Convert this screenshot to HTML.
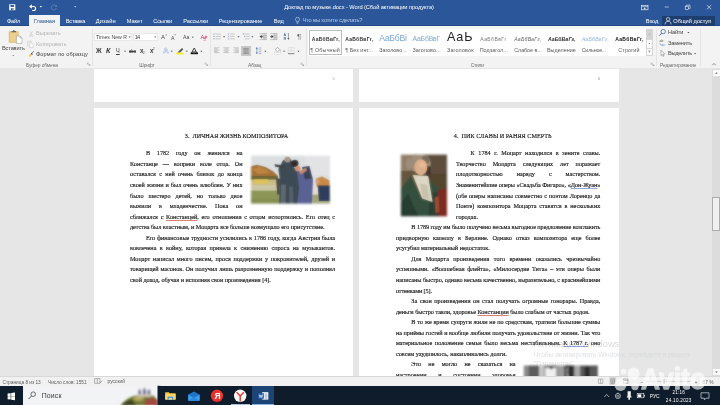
<!DOCTYPE html>
<html lang="ru"><head><meta charset="utf-8"><title>Доклад по музыке.docx - Word</title>
<style>
html,body{margin:0;padding:0;background:#e6e6e6;}
body{width:720px;height:405px;overflow:hidden;font-family:"Liberation Sans",sans-serif;}
#root{will-change:transform;position:relative;width:720px;height:405px;overflow:hidden;background:#e6e6e6;}
#root div, #root svg{position:absolute;}
.t{white-space:nowrap;line-height:normal;}
.b{box-sizing:border-box;}
.dl{font-family:"Liberation Serif",serif;font-size:6.2px;color:#161616;white-space:nowrap;line-height:7px;height:7px;-webkit-text-stroke:0.14px #161616;}
.dl.j{text-align:justify;text-align-last:justify;}
.sq{text-decoration:underline;text-decoration-color:#dc8076;text-decoration-thickness:0.45px;text-underline-offset:0.9px;}
.du{text-decoration:underline;text-decoration-color:#8fa4d8;text-decoration-thickness:0.55px;text-underline-offset:0.9px;}

</style></head>
<body>
<div id="root">
<!-- title bar + tabs -->
<div style="left:0;top:0;width:720px;height:26.2px;background:#2b579a"></div>
<div style="left:0;top:25.4px;width:720px;height:1px;background:#234a85"></div>
<!-- ribbon -->
<div style="left:0;top:26.3px;width:720px;height:42.2px;background:#f3f3f3"></div>
<div style="left:0;top:68px;width:720px;height:0.7px;background:#e5e5e5"></div>
<!-- active tab -->
<div style="left:28.9px;top:15.4px;width:31.1px;height:11.4px;background:#f3f3f3"></div>
<!-- share button -->
<div style="left:662px;top:15.8px;width:53px;height:9.8px;background:#1e3e70"></div>
<!-- group separators -->
<div style="left:92px;top:29px;width:0.6px;height:37px;background:#e4e4e4"></div>
<div style="left:210.4px;top:29px;width:0.6px;height:37px;background:#e4e4e4"></div>
<div style="left:305.6px;top:29px;width:0.6px;height:37px;background:#e4e4e4"></div>
<div style="left:655.8px;top:29px;width:0.6px;height:37px;background:#e4e4e4"></div>
<div style="left:700px;top:29px;width:0.6px;height:37px;background:#e4e4e4"></div>
<!-- font combo boxes -->
<div class="b" style="left:94px;top:32.6px;width:38.2px;height:8.8px;background:#fff;border:0.5px solid #e8e8e8"></div>
<div class="b" style="left:133.2px;top:32.6px;width:24.6px;height:8.8px;background:#fff;border:0.5px solid #e8e8e8"></div>
<!-- justify selected -->
<div style="left:241px;top:46px;width:10px;height:9.8px;background:#c8c8c8"></div>
<!-- styles gallery -->
<div style="left:308.3px;top:29.4px;width:338px;height:26.6px;background:#fff"></div>
<div class="b" style="left:308.7px;top:29.8px;width:33px;height:25.6px;background:#fff;border:0.9px solid #bdbdbd"></div>
<div class="b" style="left:646.3px;top:29.2px;width:6.3px;height:27px;background:#fff;border:0.4px solid #d6d6d6"></div>
<div style="left:646.5px;top:29.4px;width:5.9px;height:9.4px;background:#d4d4d4"></div>
<div style="left:646.5px;top:38.8px;width:5.9px;height:0.4px;background:#d6d6d6"></div>
<div style="left:646.5px;top:47.6px;width:5.9px;height:0.4px;background:#d6d6d6"></div>
<!-- document area -->
<div style="left:0;top:68.6px;width:720px;height:307.4px;background:#e6e6e6"></div>
<!-- pages -->
<div style="left:93.6px;top:68.6px;width:259.3px;height:33.4px;background:#fff"></div>
<div style="left:359.1px;top:68.6px;width:259.9px;height:33.4px;background:#fff"></div>
<div style="left:93.6px;top:107.6px;width:259.3px;height:268.6px;background:#fff"></div>
<div style="left:359.1px;top:107.6px;width:259.9px;height:268.6px;background:#fff"></div>
<!-- scrollbar -->
<div style="left:712.3px;top:68.6px;width:7.7px;height:307.4px;background:#dcdcdc"></div>
<div style="left:712.8px;top:69.5px;width:7.2px;height:6.9px;background:#fdfdfd"></div>
<div style="left:712.8px;top:368.9px;width:7.2px;height:6.4px;background:#fdfdfd"></div>
<div class="b" style="left:712.3px;top:197.1px;width:7.7px;height:34.3px;background:#f0f0f0;border:0.5px solid #ababab"></div>

<div class="dl j" style="left:145.9px;top:149.00px;width:96.6px">В 1782 году он женился на</div>
<div class="dl j" style="left:130.0px;top:160.00px;width:112.5px">Констанце — вопреки воле отца. Он</div>
<div class="dl j" style="left:130.0px;top:170.00px;width:112.5px">оставался с ней очень близок до конца</div>
<div class="dl j" style="left:130.0px;top:181.00px;width:112.5px">своей жизни и был очень влюблен. У них</div>
<div class="dl j" style="left:130.0px;top:192.00px;width:112.5px">было шестеро детей, но только двое</div>
<div class="dl j" style="left:130.0px;top:202.00px;width:112.5px">выжили в младенчестве. Пока он</div>
<div class="dl j" style="left:130.0px;top:213.00px;width:205.0px">сближался с <span class="sq">Констанцей</span>, его отношения с отцом испортились. Его отец с</div>
<div class="dl j" style="left:130.0px;top:223.00px;width:194.5px;letter-spacing:-0.0440px">детства был властным, и Моцарта все больше возмущало его присутствие.</div>
<div class="dl j" style="left:145.9px;top:234.00px;width:189.1px">Его финансовые трудности усилились в 1786 году, когда Австрия была</div>
<div class="dl j" style="left:130.0px;top:244.00px;width:205.0px">вовлечена в войну, которая привела к снижению спроса на музыкантов.</div>
<div class="dl j" style="left:130.0px;top:255.00px;width:205.0px">Моцарт написал много писем, прося поддержки у покровителей, друзей и</div>
<div class="dl j" style="left:130.0px;top:265.00px;width:205.0px">товарищей масонов. Он получил лишь разрозненную поддержку и пополнял</div>
<div class="dl j" style="left:130.0px;top:276.00px;width:140.8px;letter-spacing:-0.0299px">свой доход, обучая и исполняя свои произведения [4].</div>
<div class="dl j" style="left:470.6px;top:149.00px;width:129.7px">К 1784 г. Моцарт находился в зените славы.</div>
<div class="dl j" style="left:456.0px;top:160.00px;width:144.3px">Творчество Моцарта следующих лет поражает</div>
<div class="dl j" style="left:456.0px;top:170.00px;width:144.3px">плодотворностью наряду с мастерством.</div>
<div class="dl j" style="left:456.0px;top:181.00px;width:144.3px;letter-spacing:-0.0599px">Знаменитейшие оперы «Свадьба Фигаро», «<span class="du">Дон-Жуан</span>»</div>
<div class="dl j" style="left:456.0px;top:192.00px;width:144.3px">(обе оперы написаны совместно с поэтом Лоренцо да</div>
<div class="dl j" style="left:456.0px;top:202.00px;width:144.3px">Понте) композитора Моцарта ставятся в нескольких</div>
<div class="dl" style="left:456.0px;top:213.00px">городах.</div>
<div class="dl j" style="left:411.3px;top:223.00px;width:189.0px;letter-spacing:-0.0669px">В 1789 году им было получено весьма выгодное предложение возглавить</div>
<div class="dl j" style="left:396.0px;top:234.00px;width:204.3px">придворную капеллу в Берлине. Однако отказ композитора еще более</div>
<div class="dl j" style="left:396.0px;top:244.00px;width:93.8px;letter-spacing:-0.0624px">усугубил материальный недостаток.</div>
<div class="dl j" style="left:411.3px;top:255.00px;width:189.0px">Для Моцарта произведения того времени оказались чрезвычайно</div>
<div class="dl j" style="left:396.0px;top:265.00px;width:204.3px">успешными. «Волшебная флейта», «Милосердие Тита» – эти оперы были</div>
<div class="dl j" style="left:396.0px;top:276.00px;width:204.3px;letter-spacing:-0.0392px">написаны быстро, однако весьма качественно, выразительно, с красивейшими</div>
<div class="dl j" style="left:396.0px;top:287.00px;width:35.8px;letter-spacing:-0.1412px">оттенками [5].</div>
<div class="dl j" style="left:411.3px;top:297.00px;width:189.0px">За свои произведения он стал получать огромные гонорары. Правда,</div>
<div class="dl j" style="left:396.0px;top:308.00px;width:193.6px;letter-spacing:-0.0485px">деньги быстро таяли, здоровье <span class="sq">Констанции</span> было слабым от частых родов.</div>
<div class="dl j" style="left:411.3px;top:318.00px;width:189.0px">В то же время супруги жили не по средствам, тратили большие суммы</div>
<div class="dl j" style="left:396.0px;top:329.00px;width:204.3px;letter-spacing:-0.0228px">на приёмы гостей и вообще любили получать удовольствие от жизни. Так что</div>
<div class="dl j" style="left:396.0px;top:339.00px;width:204.3px">материальное положение семьи было весьма нестабильным. <span class="du">К 1787 г.</span> оно</div>
<div class="dl j" style="left:396.0px;top:350.00px;width:110.8px;letter-spacing:-0.0328px">совсем ухудшилось, накапливались долги.</div>
<div class="dl j" style="left:411.3px;top:360.00px;width:104.3px">Это не могло не сказаться на</div>
<div class="dl j" style="left:396.0px;top:371.00px;width:119.6px">настроении и состоянии здоровья</div>
<div class="dl j" style="left:184.8px;top:132.00px;width:103.1px;">3.&nbsp; ЛИЧНАЯ ЖИЗНЬ КОМПОЗИТОРА</div>
<div class="dl j" style="left:453.8px;top:132.00px;width:97.2px;">4.&nbsp; ПИК СЛАВЫ И РАНЯЯ СМЕРТЬ</div>
<div class="dl" style="left:332.5px;top:74.6px;font-size:4.4px;color:#8c8c8c;-webkit-text-stroke:0">5</div>
<div class="dl" style="left:598px;top:75px;font-size:4.4px;color:#8c8c8c;-webkit-text-stroke:0">6</div>
<!-- status bar -->
<div style="left:0;top:376px;width:720px;height:9.6px;background:#f1f1f1"></div>
<div style="left:0;top:376px;width:720px;height:0.6px;background:#d8d8d8"></div>
<!-- taskbar -->
<div style="left:0;top:385.5px;width:720px;height:19.5px;background:#0e1c2c"></div>
<div style="left:22.5px;top:385.8px;width:135px;height:19.2px;background:#f2f3f5"></div>
<div style="left:252px;top:385.5px;width:22.2px;height:19.5px;background:#1d4474"></div>
<div style="left:252px;top:403.8px;width:22.2px;height:1.2px;background:#86b3e6"></div>
<div style="left:230.8px;top:403.8px;width:19px;height:1.2px;background:#a9c1de"></div>

<svg width="720" height="405" viewBox="0 0 720 405" style="left:0;top:0">
<defs>
<filter id="b1" x="-20%" y="-20%" width="140%" height="140%"><feGaussianBlur stdDeviation="0.85"/></filter>
<filter id="b2" x="-20%" y="-20%" width="140%" height="140%"><feGaussianBlur stdDeviation="0.85"/></filter>
<filter id="b3" x="-20%" y="-20%" width="140%" height="140%"><feGaussianBlur stdDeviation="1.8"/></filter>
<filter id="b4" x="-20%" y="-20%" width="140%" height="140%"><feGaussianBlur stdDeviation="0.85"/></filter>
<filter id="soft" x="-10%" y="-10%" width="120%" height="120%"><feGaussianBlur stdDeviation="0.9"/></filter>
</defs>
<rect x="9.2" y="4.3" width="6.1" height="6" rx="0.4" fill="#fff"/>
<rect x="10.4" y="5" width="3.7" height="1.9" fill="#2b579a"/>
<rect x="10.9" y="8.2" width="2.8" height="2.1" fill="#2b579a"/>
<rect x="12.5" y="8.6" width="0.8" height="1.3" fill="#fff"/>
<path d="M30.6 7.1 H33.6 A2 2 0 0 1 33.6 11.1 H32.6" transform="translate(0,-0.6)" stroke="#fff" stroke-width="1.15" fill="none" stroke-linecap="round"/>
<path d="M29.1 6.5 L31.9 4.3 L31.9 8.7 Z" fill="#fff"/>
<path d="M39.75 6.05L42.05 6.05L40.90 7.40Z" fill="#fff"/>
<path d="M55.9 6 A2.5 2.5 0 1 0 56.3 8" stroke="#5d7eb7" stroke-width="0.9" fill="none"/>
<path d="M57 4.6 L57 7 L54.8 6.6 Z" fill="#5d7eb7"/>
<path d="M74.30 6.35L76.10 6.35L75.20 7.40Z" fill="#fff"/>
<rect x="641.6" y="5.5" width="6.4" height="4.3" fill="none" stroke="#fff" stroke-width="0.6"/>
<path d="M641.6 6.6h6.4" stroke="#fff" stroke-width="0.5"/>
<path d="M644.8 7.3 l1.2 1.2 h-0.8 v0.9 h-0.8 v-0.9 h-0.8 z" fill="#fff"/>
<path d="M664.7 7h4.1" stroke="#fff" stroke-width="0.55"/>
<rect x="685.2" y="6.2" width="3.5" height="3.4" fill="none" stroke="#fff" stroke-width="0.55"/>
<path d="M686.4 6.2V5.1H690V8.5H688.7" fill="none" stroke="#fff" stroke-width="0.55"/>
<path d="M706.9 5.1L711.2 9.3M711.2 5.1L706.9 9.3" stroke="#fff" stroke-width="0.6"/>
<path d="M296.5 21.8 C296.5 20.8 295.5 20.5 295.5 19.3 A2 2 0 0 1 299.5 19.3 C299.5 20.5 298.5 20.8 298.5 21.8 Z" fill="none" stroke="#dfe7f5" stroke-width="0.55"/>
<path d="M296.6 22.7h1.8M296.9 23.6h1.2" stroke="#dfe7f5" stroke-width="0.5"/>
<circle cx="668.1" cy="19.2" r="1.7" fill="none" stroke="#fff" stroke-width="0.65"/>
<path d="M665.1 24.4 C665.1 22 666.6 21.3 668.1 21.3 S671.1 22 671.1 24.4" fill="none" stroke="#fff" stroke-width="0.65"/>
<rect x="8.8" y="31.2" width="9.8" height="11.6" rx="0.6" fill="#e2be73"/>
<rect x="9.9" y="32.6" width="7.6" height="9.2" fill="#ecd090"/>
<path d="M11.6 32.3 v-1.3 h1.3 a0.9 0.9 0 0 1 1.8 0 h1.3 v1.3 z" fill="#6b6b6b"/>
<path d="M16.4 36 h3.6 l2 2 v5.4 h-5.6 z" fill="#fff" stroke="#8a8a8a" stroke-width="0.5"/>
<path d="M20 36 v2 h2" fill="none" stroke="#8a8a8a" stroke-width="0.4"/>
<path d="M12.40 55.30L14.20 55.30L13.30 56.20Z" fill="#555"/>
<path d="M29.8 31.2 L32 35 M32.6 31.2 L30.4 35" stroke="#c4c4c4" stroke-width="0.55"/>
<circle cx="30" cy="35.7" r="0.8" fill="none" stroke="#c4c4c4" stroke-width="0.5"/><circle cx="32.4" cy="35.7" r="0.8" fill="none" stroke="#c4c4c4" stroke-width="0.5"/>
<path d="M27.6 41.2h3.4v4.6h-3.4z" fill="#f3f3f3" stroke="#c2c2c2" stroke-width="0.5"/>
<path d="M29.6 42.8h2.4l1.2 1.2v3.6h-3.6z" fill="#fbfbfb" stroke="#c2c2c2" stroke-width="0.5"/>
<path d="M28.9 55.4 l1.5 -1.5 l1.3 1.3 l-1.5 1.5 z" fill="#efc040"/>
<path d="M29.4 57.2 l-0.6 -1 l1 0.6 z" fill="#efc040"/>
<path d="M30.7 53.6 l1.3 1.3 l0.8 -0.8 l-1.3 -1.3z" fill="#4a4a4a"/>
<path d="M32.2 52.8 l1.5 -1.5" stroke="#4a4a4a" stroke-width="0.8"/>
<path d="M87.5 63.0h-0.01M87.4 62.900000000000006v1.6M87.4 62.900000000000006h1.6" stroke="#777" stroke-width="0.4" fill="none"/>
<path d="M88.3 63.800000000000004L89.8 65.3M89.9 64.10000000000001V65.4H88.60000000000001" stroke="#777" stroke-width="0.45" fill="none"/>
<path d="M128.60 36.60L130.80 36.60L129.70 37.80Z" fill="#505050"/>
<path d="M154.10 36.60L156.30 36.60L155.20 37.80Z" fill="#505050"/>
<path d="M165.2 35.3 l0.9 -1.1 l0.9 1.1z" fill="#555"/>
<path d="M174.3 34.5 l0.8 1 l0.8 -1z" fill="#555"/>
<path d="M123.90 50.80L126.10 50.80L125.00 52.00Z" fill="#505050"/>
<path d="M191.70 36.80L193.90 36.80L192.80 38.00Z" fill="#505050"/>
<text x="200.6" y="38.6" font-family="Liberation Sans" font-size="5.6" fill="#a0506a">A</text>
<path d="M203.6 38.2 l2.2 -2.6 l1.6 1.2 l-2.2 2.6 z" fill="#e8688d"/>
<path d="M203.0 40.3 h3.2" stroke="#e8688d" stroke-width="0.5"/>
<path d="M170.70 50.80L172.90 50.80L171.80 52.00Z" fill="#505050"/>
<path d="M178.4 51.6 l3.6 -3.6 l1.3 1.3 l-3.6 3.6 z" fill="#555"/>
<path d="M177.3 52.4 l1.1 -0.9 l0.9 0.9 l-1.1 0.5z" fill="#777"/>
<rect x="176.2" y="52.6" width="7.4" height="1.9" fill="#f4ee2a"/>
<path d="M185.70 50.80L187.90 50.80L186.80 52.00Z" fill="#505050"/>
<rect x="190.7" y="52.4" width="7.3" height="1.8" fill="#1a1a1a"/>
<path d="M200.30 50.80L202.50 50.80L201.40 52.00Z" fill="#505050"/>
<path d="M205.20000000000002 63.099999999999994h-0.01M205.1 63.0v1.6M205.1 63.0h1.6" stroke="#777" stroke-width="0.4" fill="none"/>
<path d="M206.0 63.9L207.5 65.39999999999999M207.6 64.2V65.5H206.3" stroke="#777" stroke-width="0.45" fill="none"/>
<rect x="213.4" y="33.45" width="1.1" height="1.1" fill="#8095b5"/>
<rect x="213.4" y="35.85" width="1.1" height="1.1" fill="#8095b5"/>
<rect x="213.4" y="38.25" width="1.1" height="1.1" fill="#8095b5"/>
<path d="M215.6 34H220.8" stroke="#9c9c9c" stroke-width="0.5"/>
<path d="M215.6 36.4H220.8" stroke="#9c9c9c" stroke-width="0.5"/>
<path d="M215.6 38.8H220.8" stroke="#9c9c9c" stroke-width="0.5"/>
<path d="M223.00 36.20L225.20 36.20L224.10 37.40Z" fill="#505050"/>
<rect x="227.9" y="33.3" width="0.7" height="1.4" fill="#8095b5"/>
<rect x="227.9" y="35.699999999999996" width="0.7" height="1.4" fill="#8095b5"/>
<rect x="227.9" y="38.099999999999994" width="0.7" height="1.4" fill="#8095b5"/>
<path d="M229.8 34H234.8" stroke="#9c9c9c" stroke-width="0.5"/>
<path d="M229.8 36.4H234.8" stroke="#9c9c9c" stroke-width="0.5"/>
<path d="M229.8 38.8H234.8" stroke="#9c9c9c" stroke-width="0.5"/>
<path d="M237.40 36.20L239.60 36.20L238.50 37.40Z" fill="#505050"/>
<rect x="242.8" y="33.4" width="0.8" height="1.2" fill="#8095b5"/><rect x="244.2" y="35.8" width="0.8" height="1.2" fill="#8095b5"/><rect x="245.6" y="38.2" width="0.8" height="1.2" fill="#8095b5"/>
<path d="M244.4 34H249.6" stroke="#9c9c9c" stroke-width="0.5"/>
<path d="M245.8 36.4H249.6" stroke="#9c9c9c" stroke-width="0.5"/>
<path d="M247.2 38.8H249.6" stroke="#9c9c9c" stroke-width="0.5"/>
<path d="M251.30 36.20L253.50 36.20L252.40 37.40Z" fill="#505050"/>
<rect x="262.4" y="33.4" width="4.4" height="6.4" fill="#d4d4d4"/>
<path d="M259.4 33.6H266.8" stroke="#9a9a9a" stroke-width="0.5"/>
<path d="M259.4 39.6H266.8" stroke="#9a9a9a" stroke-width="0.5"/>
<path d="M262.8 35.6H266.8" stroke="#9a9a9a" stroke-width="0.5"/>
<path d="M262.8 37.6H266.8" stroke="#9a9a9a" stroke-width="0.5"/>
<path d="M259.6 36.6 l2.2 -1.6 v3.2z" fill="#333"/><path d="M261.6 36.6h1.6" stroke="#333" stroke-width="0.6"/>
<rect x="273.2" y="33.4" width="4.2" height="6.4" fill="#d4d4d4"/>
<path d="M270.1 33.6H277.4" stroke="#9a9a9a" stroke-width="0.5"/>
<path d="M270.1 39.6H277.4" stroke="#9a9a9a" stroke-width="0.5"/>
<path d="M273.6 35.6H277.4" stroke="#9a9a9a" stroke-width="0.5"/>
<path d="M273.6 37.6H277.4" stroke="#9a9a9a" stroke-width="0.5"/>
<path d="M273.6 36.6 l-2.2 -1.6 v3.2z" fill="#333"/><path d="M270 36.6h1.6" stroke="#333" stroke-width="0.6"/>
<text x="283.5" y="36" font-family="Liberation Sans" font-size="3.6" font-weight="700" fill="#3b6fb6">А</text>
<text x="283.6" y="39.9" font-family="Liberation Sans" font-size="3.6" font-weight="700" fill="#3b6fb6">Я</text>
<path d="M288.4 33v6" stroke="#555" stroke-width="0.55"/><path d="M287.2 38.2 l1.2 1.6 l1.2 -1.6z" fill="#555"/>
<path d="M214 47.8H219.4" stroke="#999" stroke-width="0.5"/>
<path d="M214 50.2H219.4" stroke="#999" stroke-width="0.5"/>
<path d="M214 52.6H219.4" stroke="#999" stroke-width="0.5"/>
<path d="M214 49H217.6" stroke="#999" stroke-width="0.5"/>
<path d="M214 51.4H217.6" stroke="#999" stroke-width="0.5"/>
<path d="M223.3 47.8H229.3" stroke="#999" stroke-width="0.5"/>
<path d="M223.3 50.2H229.3" stroke="#999" stroke-width="0.5"/>
<path d="M223.3 52.6H229.3" stroke="#999" stroke-width="0.5"/>
<path d="M224.6 49H228" stroke="#999" stroke-width="0.5"/>
<path d="M224.6 51.4H228" stroke="#999" stroke-width="0.5"/>
<path d="M233.4 47.8H238.8" stroke="#999" stroke-width="0.5"/>
<path d="M233.4 50.2H238.8" stroke="#999" stroke-width="0.5"/>
<path d="M233.4 52.6H238.8" stroke="#999" stroke-width="0.5"/>
<path d="M235.2 49H238.8" stroke="#999" stroke-width="0.5"/>
<path d="M235.2 51.4H238.8" stroke="#999" stroke-width="0.5"/>
<path d="M243.2 48.4H248.8" stroke="#666" stroke-width="0.5"/>
<path d="M243.2 49.7H248.8" stroke="#666" stroke-width="0.5"/>
<path d="M243.2 51H248.8" stroke="#666" stroke-width="0.5"/>
<path d="M243.2 52.3H248.8" stroke="#666" stroke-width="0.5"/>
<path d="M243.2 53.6H248.8" stroke="#666" stroke-width="0.5"/>
<path d="M256.8 47.6v6" stroke="#3b6fb6" stroke-width="0.5"/><path d="M255.7 48.8l1.1-1.5l1.1 1.5zM255.7 52.4l1.1 1.5l1.1-1.5z" fill="#3b6fb6"/>
<path d="M258.6 48H261.4" stroke="#777" stroke-width="0.5"/>
<path d="M258.6 49.9H261.4" stroke="#777" stroke-width="0.5"/>
<path d="M258.6 51.8H261.4" stroke="#777" stroke-width="0.5"/>
<path d="M258.6 53.6H261.4" stroke="#777" stroke-width="0.5"/>
<path d="M264.30 50.80L266.50 50.80L265.40 52.00Z" fill="#505050"/>
<path d="M275.2 49.6 l2.3 -2.3 l2.3 2.3 l-2.3 2.3 z" fill="#fff" stroke="#666" stroke-width="0.5"/>
<path d="M280.2 50 q0.7 1 0 1.6 q-0.7 -0.6 0 -1.6z" fill="#666"/>
<rect x="274.2" y="52.7" width="6.4" height="1.6" fill="#fdfdfd" stroke="#bbb" stroke-width="0.3"/>
<path d="M283.00 50.80L285.20 50.80L284.10 52.00Z" fill="#505050"/>
<rect x="288.2" y="47.6" width="6" height="6" fill="none" stroke="#aaa" stroke-width="0.4" stroke-dasharray="0.5 0.5"/>
<path d="M291.2 47.6v6M288.2 50.6h6" stroke="#aaa" stroke-width="0.4" stroke-dasharray="0.5 0.5"/>
<path d="M288 53.7h6.4" stroke="#444" stroke-width="0.6"/>
<path d="M297.40 50.80L299.60 50.80L298.50 52.00Z" fill="#505050"/>
<path d="M301.2 63.2h-0.01M301.09999999999997 63.10000000000001v1.6M301.09999999999997 63.10000000000001h1.6" stroke="#777" stroke-width="0.4" fill="none"/>
<path d="M302.0 64.0L303.5 65.5M303.59999999999997 64.30000000000001V65.60000000000001H302.29999999999995" stroke="#777" stroke-width="0.45" fill="none"/>
<path d="M648.5 34.7l0.95-1.1l0.95 1.1z" fill="#aaa"/>
<path d="M648.5 43l0.95 1.1l0.95-1.1z" fill="#555"/>
<path d="M648.4 50.7h2" stroke="#555" stroke-width="0.4"/><path d="M648.5 51.6l0.95 1.1l0.95-1.1z" fill="#555"/>
<path d="M651.4 63.2h-0.01M651.3000000000001 63.10000000000001v1.6M651.3000000000001 63.10000000000001h1.6" stroke="#777" stroke-width="0.4" fill="none"/>
<path d="M652.2 64.0L653.7 65.5M653.8000000000001 64.30000000000001V65.60000000000001H652.5" stroke="#777" stroke-width="0.45" fill="none"/>
<circle cx="663.2" cy="31.6" r="2.2" fill="none" stroke="#3f5f9e" stroke-width="0.75"/><path d="M661.6 33.3l-2.2 2.3" stroke="#3f5f9e" stroke-width="1"/>
<path d="M687.30 32.10L689.50 32.10L688.40 33.30Z" fill="#505050"/>
<text x="659.6" y="42.3" font-family="Liberation Sans" font-size="3.3" fill="#555">ab</text>
<text x="661.6" y="45.6" font-family="Liberation Sans" font-size="3.3" fill="#3b6fb6">ac</text>
<path d="M660 43.2v1.4h1.2" stroke="#3b6fb6" stroke-width="0.4" fill="none"/>
<path d="M661 50.2 v5.4 l1.3 -1.2 l0.9 2 l0.8 -0.4 l-0.9 -1.9 h1.7 z" fill="#fff" stroke="#666" stroke-width="0.45"/>
<path d="M694.00 53.00L696.20 53.00L695.10 54.20Z" fill="#505050"/>
<path d="M712.2 65.3l1.8-1.9l1.8 1.9" stroke="#555" stroke-width="0.6" fill="none"/>
<path d="M715.1 73.7l1.3-1.5l1.3 1.5z" fill="#606060"/>
<path d="M715.1 371.4l1.3 1.5l1.3-1.5z" fill="#606060"/><path d="M94.6 378.6h5.4v4.8h-5.4zM97.3 378.6v4.8" fill="none" stroke="#666" stroke-width="0.45"/>
<path d="M99.6 381.6l0.9 0.9l1.6-2" stroke="#666" stroke-width="0.5" fill="none"/>
<path d="M598.4 379h4.4v4.4h-4.4zM600.6 379v4.4" fill="none" stroke="#777" stroke-width="0.45"/>
<rect x="609.2" y="377" width="7" height="8" fill="#d6d6d6"/>
<path d="M610.9 378.8h3.6v4.6h-3.6zM611.6 380.2h2.2M611.6 381.2h2.2M611.6 382.2h2.2" fill="none" stroke="#666" stroke-width="0.4"/>
<path d="M623.4 379h4.6v4.4h-4.6zM623.4 380.3h4.6" fill="none" stroke="#777" stroke-width="0.45"/>
<path d="M646 381.4h46" stroke="#8a8a8a" stroke-width="0.4"/>
<rect x="663.6" y="378.8" width="1.1" height="5" fill="#666"/>
<path d="M669 380.2v2.4" stroke="#8a8a8a" stroke-width="0.4"/>
<path d="M7.6 393.6l3.1-0.45v3h-3.1zM11.2 393.1l3.8-0.55v3.6h-3.8zM7.6 396.6h3.1v3l-3.1-0.45zM11.2 396.6h3.8v3.6l-3.8-0.55z" fill="#fff"/>
<circle cx="33.2" cy="394.2" r="2.3" fill="none" stroke="#333" stroke-width="0.7"/><path d="M31.5 396l-2.9 3" stroke="#333" stroke-width="0.8"/>
<g filter="url(#b4)">
<path d="M120.5 405.5 C125 400 130 396.8 136 395.6 L152 395.2 C155 396.5 157 399 158 401 L158 405.5z" fill="#6f7a35"/>
<path d="M120.5 405.5 C124 402 128 400 132 399.4 L136 405.5z" fill="#3f4424"/>
<ellipse cx="138.5" cy="398.8" rx="5.5" ry="2.2" fill="#b5aa62"/>
<path d="M146 399.6 C150 397.4 155 398 158 400 L158 405.5 L144 405.5z" fill="#a0483e"/>
<rect x="137.4" y="393.8" width="14" height="3" fill="#d6cdbd"/>
<path d="M138.4 394.6v-3.2l1.3-3l1.3 3v3.2zM143 394.6v-4l1.4-3.4l1.4 3.4v4zM147.6 394.6v-3l1.3-2.8l1.3 2.8v3z" fill="#6c6d8c"/>
</g>
<rect x="157.5" y="385.8" width="3" height="19.2" fill="#0e1c2c"/>
<path d="M165.2 392.2h3.6l1 1h5.8v6.4h-10.4z" fill="#f4c443"/>
<path d="M165.2 394.2h10.4v5.4h-10.4z" fill="#fbd768"/>
<path d="M167.6 396.6h5.6v3h-5.6z" fill="#3f97e0"/>
<path d="M168.8 397.8h3.2v1.8h-3.2z" fill="#fbd768"/>
<path d="M188.2 394.6l5.7-3.2l5.7 3.2v6h-11.4z" fill="#1f74c7"/>
<path d="M188.2 394.8l5.7 3.2l5.7-3.2v6h-11.4z" fill="#3aa0ee"/>
<path d="M188.2 400.8l5.7-3.6l5.7 3.6z" fill="#2b88dc"/>
<circle cx="217" cy="395.8" r="6.2" fill="#e8312a"/>
<text x="214.5" y="399" font-family="Liberation Sans" font-size="8.6" font-weight="700" fill="#fff">Я</text>
<circle cx="240.2" cy="395.8" r="6.2" fill="#fff"/>
<path d="M236.6 392.2l3.6 3.8v5.4M243.8 392.2l-3.6 3.8" stroke="#e33b2e" stroke-width="1.5" fill="none"/>
<rect x="262.2" y="392.2" width="6.1" height="7.4" fill="#fff"/>
<path d="M264.6 394h2.8M264.6 395.4h2.8M264.6 396.8h2.8M264.6 398.2h2.8" stroke="#2b579a" stroke-width="0.45"/>
<rect x="258.3" y="393.2" width="5.6" height="5.6" fill="#2b63b3"/>
<path d="M259.2 394.6l0.8 3l0.9-2.6l0.9 2.6l0.8-3" stroke="#fff" stroke-width="0.6" fill="none"/>
<path d="M604.3 397l2.4-2.5l2.4 2.5" stroke="#fff" stroke-width="0.6" fill="none"/>
<circle cx="617.9" cy="396" r="2.5" fill="none" stroke="#e8e8e8" stroke-width="0.7"/><path d="M617.9 392.4v1.4M616.9 395.4h2v1.6h-2z" stroke="#e8e8e8" stroke-width="0.5" fill="none"/>
<path d="M627.6 391.2h3.2v5.2h-3.2zM628.4 396.4h1.6v3.4h-1.6z" fill="#f4f4f4"/>
<path d="M626.9 396.2h4.6v1.4h-4.6z" fill="#e8e8e8"/>
<rect x="637.2" y="393.6" width="6.6" height="4.2" fill="none" stroke="#fff" stroke-width="0.55"/><rect x="637.9" y="394.3" width="3.4" height="2.8" fill="#fff"/><rect x="644" y="394.8" width="0.8" height="1.8" fill="#fff"/>
<path d="M701 392.8h8v5.4h-3l-1.6 1.6v-1.6h-3.4z" fill="none" stroke="#fff" stroke-width="0.6"/><defs>
<mask id="m1"><rect x="1" y="1" width="79" height="48" fill="#fff" filter="url(#soft)"/></mask>
<mask id="m2"><rect x="0.8" y="0.8" width="46.2" height="61.7" fill="#fff" filter="url(#soft)"/></mask>
<mask id="m3"><rect x="1.2" y="1" width="74" height="14" fill="#fff" filter="url(#soft)"/></mask>
<clipPath id="c3"><rect x="-2" y="-2" width="80" height="13.5"/></clipPath>
</defs>
<g transform="translate(250,154.6)"><g mask="url(#m1)"><g filter="url(#b1)">
<rect x="-3" y="-3" width="87" height="56" fill="#dcdfe0"/>
<rect x="55" y="-3" width="30" height="24" fill="#e3e3e6"/>
<path d="M-2 12.5 L6.9 10.2 L15.7 12.5 L23.1 16.6 L27.5 20.6 L27.5 25 L-2 25z" fill="#a37238"/>
<path d="M2 14.5 L9 12 L16 15 L20 18.5 L8 19.5 z" fill="#bd8540"/>
<path d="M-2 21.5 L28 21.3 L28 25.6 L-2 25.6z" fill="#6e6535"/>
<rect x="-2" y="25" width="32" height="6" fill="#cbbf86"/>
<rect x="4" y="24.6" width="14" height="4.6" fill="#dcc25c"/>
<rect x="-2" y="30.4" width="33" height="6" fill="#cdc7a4"/>
<rect x="-2" y="36" width="34" height="16" fill="#8d9659"/>
<path d="M-2 44 H32 V52 H-2z" fill="#858f52"/>
<rect x="60" y="24" width="9" height="23" fill="#e3ddd3"/>
<rect x="58" y="40" width="26" height="12" fill="#a3a67c"/>
<path d="M32.8 5.8 L39.4 2.8 L42.4 7.3 L43.9 13.2 L54.3 20.6 L53.5 29.5 L48.6 52 L29.1 52 L29.8 25 L28.3 14.7z" fill="#3d4a54"/>
<path d="M24.6 9.6 L33.5 10.6 L33.5 13.6 L25 12.2z" fill="#3a3f45"/>
<path d="M26 24 L30 24 L29.5 40 L27.2 40z" fill="#4a4a48"/>
<circle cx="37.4" cy="4.8" r="3" fill="#a99b8b"/>
<path d="M31 30 L36 30 L35.5 52 L30.5 52z" fill="#5d6971"/>
<path d="M39 32 L43 32 L43.5 52 L39.5 52z" fill="#55616a"/>
<path d="M46.9 17.6 L60.2 14.7 L63.1 25 L61.7 52 L46.9 52 L49.1 32.4z" fill="#5a6294"/>
<path d="M52 12.4 L59.5 11.4 L62 24 L55 25z" fill="#3a4458"/>
<circle cx="44.8" cy="8.9" r="3.7" fill="#2e2a2c"/>
<ellipse cx="47.8" cy="14" rx="2.8" ry="2.9" fill="#cf9478"/>
<path d="M49 17 L56 13 L57 16 L51 20z" fill="#c48a6e"/>
<path d="M66.1 24 L72 22 L80 26 L81 32 L66.5 32z" fill="#c98a45"/>
<path d="M67.6 31 L81 31 L81 46.5 L69 46.5z" fill="#2f3d5c"/>
<ellipse cx="67.5" cy="27" rx="2.2" ry="2.4" fill="#d2a07e"/>
</g><g opacity="0.5"><rect x="-3" y="-3" width="87" height="56" fill="#dcdfe0"/><rect x="55" y="-3" width="30" height="24" fill="#e3e3e6"/><path d="M-2 12.5 L6.9 10.2 L15.7 12.5 L23.1 16.6 L27.5 20.6 L27.5 25 L-2 25z" fill="#a37238"/><path d="M2 14.5 L9 12 L16 15 L20 18.5 L8 19.5 z" fill="#bd8540"/><path d="M-2 21.5 L28 21.3 L28 25.6 L-2 25.6z" fill="#6e6535"/><rect x="-2" y="25" width="32" height="6" fill="#cbbf86"/><rect x="4" y="24.6" width="14" height="4.6" fill="#dcc25c"/><rect x="-2" y="30.4" width="33" height="6" fill="#cdc7a4"/><rect x="-2" y="36" width="34" height="16" fill="#8d9659"/><path d="M-2 44 H32 V52 H-2z" fill="#858f52"/><rect x="60" y="24" width="9" height="23" fill="#e3ddd3"/><rect x="58" y="40" width="26" height="12" fill="#a3a67c"/><path d="M32.8 5.8 L39.4 2.8 L42.4 7.3 L43.9 13.2 L54.3 20.6 L53.5 29.5 L48.6 52 L29.1 52 L29.8 25 L28.3 14.7z" fill="#3d4a54"/><path d="M24.6 9.6 L33.5 10.6 L33.5 13.6 L25 12.2z" fill="#3a3f45"/><path d="M26 24 L30 24 L29.5 40 L27.2 40z" fill="#4a4a48"/><circle cx="37.4" cy="4.8" r="3" fill="#a99b8b"/><path d="M31 30 L36 30 L35.5 52 L30.5 52z" fill="#5d6971"/><path d="M39 32 L43 32 L43.5 52 L39.5 52z" fill="#55616a"/><path d="M46.9 17.6 L60.2 14.7 L63.1 25 L61.7 52 L46.9 52 L49.1 32.4z" fill="#5a6294"/><path d="M52 12.4 L59.5 11.4 L62 24 L55 25z" fill="#3a4458"/><circle cx="44.8" cy="8.9" r="3.7" fill="#2e2a2c"/><ellipse cx="47.8" cy="14" rx="2.8" ry="2.9" fill="#cf9478"/><path d="M49 17 L56 13 L57 16 L51 20z" fill="#c48a6e"/><path d="M66.1 24 L72 22 L80 26 L81 32 L66.5 32z" fill="#c98a45"/><path d="M67.6 31 L81 31 L81 46.5 L69 46.5z" fill="#2f3d5c"/><ellipse cx="67.5" cy="27" rx="2.2" ry="2.4" fill="#d2a07e"/></g></g></g>
<g transform="translate(400,153.8)"><g mask="url(#m2)"><g filter="url(#b1)">
<rect x="-3" y="-3" width="54" height="70" fill="#66563f"/>
<rect x="-3" y="-3" width="17" height="20" fill="#93806a"/>
<rect x="28" y="-3" width="23" height="30" fill="#5e4e3c"/>
<rect x="30" y="20" width="21" height="18" fill="#54452f"/>
<ellipse cx="20.2" cy="9.6" rx="10.6" ry="10" fill="#9d8d79"/>
<ellipse cx="25.5" cy="6" rx="4" ry="4.5" fill="#7d6d5b"/>
<ellipse cx="9" cy="10" rx="3" ry="6" fill="#9d8c7a"/>
<path d="M26 12 L30.5 13 L30.5 25 L26.5 24z" fill="#453529"/>
<ellipse cx="20.8" cy="13.4" rx="6.5" ry="8" fill="#dcae8a"/>
<ellipse cx="22.5" cy="11" rx="3.6" ry="3" fill="#e4b994"/>
<path d="M0 66 L0 36 L10.9 22.1 L22.2 46.3 L30 27.3 L42.1 37.7 L48 66z" fill="#34503e"/>
<path d="M0 50 L8 40 L20 66 L0 66z" fill="#283d30"/>
<path d="M30 40 L38 38 L40 66 L28 66z" fill="#2a4133"/>
<path d="M12.7 21.3 L28.2 22.1 L32.6 48.1 L22.2 44.6z" fill="#ddd8c4"/>
<path d="M20 30 L27 31 L30 46 L23 44z" fill="#c9c3ac"/>
<path d="M37.5 36.8 L50 34 L50 66 L38.5 66z" fill="#7c2c22"/>
<path d="M34.5 44 L38.5 42 L39.5 58 L35.5 60z" fill="#9a4a34"/>
</g><g opacity="0.5"><rect x="-3" y="-3" width="54" height="70" fill="#66563f"/><rect x="-3" y="-3" width="17" height="20" fill="#93806a"/><rect x="28" y="-3" width="23" height="30" fill="#5e4e3c"/><rect x="30" y="20" width="21" height="18" fill="#54452f"/><ellipse cx="20.2" cy="9.6" rx="10.6" ry="10" fill="#9d8d79"/><ellipse cx="25.5" cy="6" rx="4" ry="4.5" fill="#7d6d5b"/><ellipse cx="9" cy="10" rx="3" ry="6" fill="#9d8c7a"/><path d="M26 12 L30.5 13 L30.5 25 L26.5 24z" fill="#453529"/><ellipse cx="20.8" cy="13.4" rx="6.5" ry="8" fill="#dcae8a"/><ellipse cx="22.5" cy="11" rx="3.6" ry="3" fill="#e4b994"/><path d="M0 66 L0 36 L10.9 22.1 L22.2 46.3 L30 27.3 L42.1 37.7 L48 66z" fill="#34503e"/><path d="M0 50 L8 40 L20 66 L0 66z" fill="#283d30"/><path d="M30 40 L38 38 L40 66 L28 66z" fill="#2a4133"/><path d="M12.7 21.3 L28.2 22.1 L32.6 48.1 L22.2 44.6z" fill="#ddd8c4"/><path d="M20 30 L27 31 L30 46 L23 44z" fill="#c9c3ac"/><path d="M37.5 36.8 L50 34 L50 66 L38.5 66z" fill="#7c2c22"/><path d="M34.5 44 L38.5 42 L39.5 58 L35.5 60z" fill="#9a4a34"/></g></g></g>
<g transform="translate(522.6,364.5)" clip-path="url(#c3)"><g mask="url(#m3)"><g filter="url(#b2)">
<rect x="-3" y="-3" width="82" height="18" fill="#5a5a5a"/>
<rect x="-3" y="-3" width="10" height="18" fill="#8a8a8a"/>
<rect x="6" y="-3" width="10" height="18" fill="#5c5c5c"/>
<rect x="16.4" y="-3" width="5.6" height="18" fill="#c4c4c4"/>
<rect x="22.6" y="3.4" width="11" height="12" fill="#f0f0f0"/>
<rect x="22" y="-3" width="12" height="6" fill="#7e7e7e"/>
<circle cx="28.6" cy="3" r="1.7" fill="#2e2e2e"/>
<rect x="33.7" y="-3" width="8.2" height="18" fill="#9c9c9c"/>
<rect x="42.2" y="-3" width="9.2" height="18" fill="#2e2e2e"/>
<path d="M44.8 3 Q43.6 8 45.4 13" stroke="#eee" stroke-width="0.9" fill="none"/>
<rect x="51.8" y="-3" width="5.6" height="18" fill="#a8a8a8"/>
<rect x="57.4" y="-3" width="20" height="18" fill="#585858"/>
<rect x="62" y="2" width="5" height="13" fill="#2c2c2c"/>
</g></g></g>
</svg>
<div class="t " style="left:284.20px;top:4.00px;font-size:5.7px;color:#ffffff;letter-spacing:-0.068px;">Доклад по музыке.docx - Word (Сбой активации продукта)</div>
<div class="t " style="left:6.90px;top:18.00px;font-size:5.7px;color:#ffffff;letter-spacing:-0.178px;">Файл</div>
<div class="t " style="left:33.90px;top:18.00px;font-size:5.7px;color:#2b579a;letter-spacing:-0.085px;">Главная</div>
<div class="t " style="left:65.80px;top:18.00px;font-size:5.7px;color:#ffffff;letter-spacing:-0.241px;">Вставка</div>
<div class="t " style="left:95.80px;top:18.00px;font-size:5.7px;color:#ffffff;letter-spacing:0.140px;">Дизайн</div>
<div class="t " style="left:126.70px;top:18.00px;font-size:5.7px;color:#ffffff;letter-spacing:-0.066px;">Макет</div>
<div class="t " style="left:153.30px;top:18.00px;font-size:5.7px;color:#ffffff;letter-spacing:-0.228px;">Ссылки</div>
<div class="t " style="left:183.30px;top:18.00px;font-size:5.7px;color:#ffffff;letter-spacing:-0.110px;">Рассылки</div>
<div class="t " style="left:218.70px;top:18.00px;font-size:5.7px;color:#ffffff;letter-spacing:-0.015px;">Рецензирование</div>
<div class="t " style="left:273.70px;top:18.00px;font-size:5.7px;color:#ffffff;letter-spacing:-0.104px;">Вид</div>
<div class="t " style="left:302.50px;top:17.00px;font-size:5.7px;color:#b9c9e4;letter-spacing:-0.137px;">Что вы хотите сделать?</div>
<div class="t " style="left:645.80px;top:18.00px;font-size:5.7px;color:#ffffff;letter-spacing:-0.099px;">Вход</div>
<div class="t " style="left:673.30px;top:18.00px;font-size:5.7px;color:#ffffff;letter-spacing:-0.025px;">Общий доступ</div>
<div class="t " style="left:2.00px;top:45.00px;font-size:5.6px;color:#444444;letter-spacing:-0.130px;">Вставить</div>
<div class="t " style="left:36.00px;top:30.00px;font-size:5.6px;color:#b4b4b4;letter-spacing:-0.026px;">Вырезать</div>
<div class="t " style="left:36.00px;top:41.00px;font-size:5.6px;color:#b4b4b4;letter-spacing:0.055px;">Копировать</div>
<div class="t " style="left:36.00px;top:51.00px;font-size:5.6px;color:#444444;letter-spacing:0.105px;">Формат по образцу</div>
<div class="t " style="left:26.00px;top:63.00px;font-size:4.9px;color:#6a6a6a;letter-spacing:-0.108px;">Буфер обмена</div>
<div class="t " style="left:139.30px;top:63.00px;font-size:4.9px;color:#6a6a6a;letter-spacing:-0.144px;">Шрифт</div>
<div class="t " style="left:248.00px;top:63.00px;font-size:4.9px;color:#6a6a6a;letter-spacing:-0.089px;">Абзац</div>
<div class="t " style="left:470.80px;top:63.00px;font-size:4.9px;color:#6a6a6a;letter-spacing:-0.243px;">Стили</div>
<div class="t " style="left:660.00px;top:63.00px;font-size:4.9px;color:#6a6a6a;letter-spacing:-0.073px;">Редактирование</div>
<div class="t " style="left:95.70px;top:34.00px;font-size:5.9px;color:#444444;transform:scaleX(0.8811);transform-origin:0 0;">Times New R</div>
<div class="t " style="left:134.70px;top:34.00px;font-size:5.6px;color:#444444;letter-spacing:-0.815px;">14</div>
<div class="t " style="left:95.90px;top:47.00px;font-size:6.6px;color:#333;font-weight:700;transform:scaleX(0.9387);transform-origin:0 0;">Ж</div>
<div class="t " style="left:105.90px;top:47.00px;font-size:6.6px;color:#333;font-weight:700;font-style:italic;transform:scaleX(1.0843);transform-origin:0 0;">К</div>
<div class="t " style="left:116.20px;top:47.00px;font-size:6.6px;color:#3a3a3a;transform:scaleX(0.8410);transform-origin:0 0;text-decoration:underline;text-decoration-thickness:0.6px;text-underline-offset:0.7px;">Ч</div>
<div class="t " style="left:129.20px;top:49.00px;font-size:4.6px;color:#444;font-weight:700;transform:scaleX(0.8830);transform-origin:0 0;text-decoration:line-through;text-decoration-thickness:0.35px;">abc</div>
<div class="t " style="left:139.80px;top:47.00px;font-size:6.8px;color:#3a3a3a;font-weight:700;transform:scaleX(0.8989);transform-origin:0 0;">x</div>
<div class="t " style="left:143.30px;top:51.00px;font-size:3.2px;color:#444;transform:scaleX(0.9551);transform-origin:0 0;">2</div>
<div class="t " style="left:149.60px;top:47.00px;font-size:6.8px;color:#3a3a3a;font-weight:700;transform:scaleX(0.8989);transform-origin:0 0;">x</div>
<div class="t " style="left:153.10px;top:47.00px;font-size:3.2px;color:#444;transform:scaleX(0.9551);transform-origin:0 0;">2</div>
<div class="t " style="left:161.20px;top:34.00px;font-size:6.0px;color:#4a4a4a;transform:scaleX(0.9995);transform-origin:0 0;">A</div>
<div class="t " style="left:170.80px;top:35.00px;font-size:5.3px;color:#4a4a4a;transform:scaleX(0.9900);transform-origin:0 0;">A</div>
<div class="t " style="left:183.00px;top:34.00px;font-size:5.9px;color:#4a4a4a;transform:scaleX(0.8868);transform-origin:0 0;">Aa</div>
<div class="t " style="left:162.80px;top:46.00px;font-size:7.6px;color:#f4f8ff;font-weight:700;transform:scaleX(1.0385);transform-origin:0 0;-webkit-text-stroke:0.45px #8fb2e6;">A</div>
<div class="t " style="left:191.20px;top:46.00px;font-size:7.2px;color:#333;transform:scaleX(1.3326);transform-origin:0 0;">A</div>
<div class="t " style="left:297.00px;top:33.00px;font-size:6.6px;color:#6a6a6a;transform:scaleX(1.1846);transform-origin:0 0;">¶</div>
<div class="t " style="left:668.00px;top:29.00px;font-size:5.6px;color:#444444;letter-spacing:-0.136px;">Найти</div>
<div class="t " style="left:668.00px;top:40.00px;font-size:5.6px;color:#444444;letter-spacing:-0.146px;">Заменить</div>
<div class="t " style="left:668.00px;top:50.00px;font-size:5.6px;color:#444444;letter-spacing:-0.229px;">Выделить</div>
<div class="t " style="left:311.70px;top:36.00px;font-size:5.0px;color:#333;font-weight:700;letter-spacing:0.290px;">АаБбВвГг,</div>
<div class="t " style="left:310.30px;top:47.00px;font-size:5.4px;color:#5a5a5a;letter-spacing:0.159px;">¶ Обычный</div>
<div class="t " style="left:345.30px;top:36.00px;font-size:5.0px;color:#333;font-weight:700;letter-spacing:0.257px;">АаБбВвГг,</div>
<div class="t " style="left:345.30px;top:47.00px;font-size:5.4px;color:#5a5a5a;letter-spacing:0.043px;">¶ Без инт...</div>
<div class="t " style="left:379.20px;top:33.00px;font-size:8.6px;color:#7ba7d3;letter-spacing:-0.222px;">АаБбВі</div>
<div class="t " style="left:379.20px;top:47.00px;font-size:5.4px;color:#5a5a5a;letter-spacing:-0.002px;">Заголово...</div>
<div class="t " style="left:412.50px;top:35.00px;font-size:6.8px;color:#7ba7d3;letter-spacing:-0.154px;">АаБбВвГ</div>
<div class="t " style="left:412.50px;top:47.00px;font-size:5.4px;color:#5a5a5a;letter-spacing:0.070px;">Заголово...</div>
<div class="t " style="left:447.00px;top:30.00px;font-size:12.6px;color:#222;letter-spacing:0.826px;">АаЬ</div>
<div class="t " style="left:447.00px;top:47.00px;font-size:5.4px;color:#5a5a5a;letter-spacing:0.146px;">Заголовок</div>
<div class="t " style="left:480.30px;top:36.00px;font-size:5.0px;color:#777;letter-spacing:0.445px;">АаБбВвГг</div>
<div class="t " style="left:479.70px;top:47.00px;font-size:5.4px;color:#5a5a5a;letter-spacing:0.047px;">Подзагол...</div>
<div class="t " style="left:514.20px;top:36.00px;font-size:5.2px;color:#666;font-style:italic;letter-spacing:0.201px;">АаБбВвГг,</div>
<div class="t " style="left:514.20px;top:47.00px;font-size:5.4px;color:#5a5a5a;letter-spacing:-0.048px;">Слабое в...</div>
<div class="t " style="left:548.00px;top:36.00px;font-size:5.2px;color:#333;font-weight:700;font-style:italic;letter-spacing:-0.006px;">АаБбВвГг,</div>
<div class="t " style="left:547.00px;top:47.00px;font-size:5.4px;color:#5a5a5a;letter-spacing:0.021px;">Выделение</div>
<div class="t " style="left:581.70px;top:36.00px;font-size:5.2px;color:#8fb4dc;font-style:italic;letter-spacing:0.201px;">АаБбВвГг,</div>
<div class="t " style="left:581.70px;top:47.00px;font-size:5.4px;color:#5a5a5a;letter-spacing:-0.227px;">Сильное...</div>
<div class="t " style="left:615.30px;top:36.00px;font-size:5.0px;color:#111;font-weight:700;letter-spacing:0.301px;">АаБбВвГг,</div>
<div class="t " style="left:618.30px;top:47.00px;font-size:5.4px;color:#5a5a5a;letter-spacing:0.145px;">Строгий</div>
<div class="t " style="left:2.50px;top:380.00px;font-size:4.8px;color:#5e5e5e;letter-spacing:-0.022px;">Страница 8 из 13</div>
<div class="t " style="left:48.00px;top:380.00px;font-size:4.8px;color:#5e5e5e;letter-spacing:-0.016px;">Число слов: 1551</div>
<div class="t " style="left:107.50px;top:379.00px;font-size:4.8px;color:#5e5e5e;letter-spacing:0.039px;">русский</div>
<div class="t " style="left:702.50px;top:380.00px;font-size:4.8px;color:#5e5e5e;letter-spacing:0.015px;">87 %</div>
<div class="t " style="left:640.50px;top:379.00px;font-size:5px;color:#5e5e5e;letter-spacing:0.080px;">−</div>
<div class="t " style="left:694.50px;top:379.00px;font-size:5px;color:#5e5e5e;letter-spacing:0.080px;">+</div>
<div class="t " style="left:41.70px;top:392.00px;font-size:6.9px;color:#3a3a3a;letter-spacing:0.176px;">Поиск</div>
<div class="t " style="left:649.80px;top:393.00px;font-size:5.0px;color:#ffffff;letter-spacing:-0.071px;">РУС</div>
<div class="t " style="left:672.50px;top:390.00px;font-size:4.6px;color:#ffffff;letter-spacing:0.198px;">21:16</div>
<div class="t " style="left:665.80px;top:398.00px;font-size:4.6px;color:#ffffff;letter-spacing:0.288px;">24.10.2023</div>
<!-- Windows activation watermark -->
<div class="t" style="left:533.6px;top:339.4px;font-size:9.3px;color:rgba(120,120,120,0.28)">Активация Windows</div>
<div class="t" style="left:533.8px;top:350.6px;font-size:6.6px;color:rgba(125,130,140,0.26)">Чтобы активировать Windows, перейдите в раздел</div>
<div class="t" style="left:533.8px;top:360px;font-size:6.6px;color:rgba(150,150,150,0.3)">"Параметры".</div>
<div style="left:619px;top:339px;width:80px;height:30px;overflow:hidden">
<div class="t" style="left:-85.4px;top:0.4px;font-size:9.3px;color:rgba(255,255,255,0.4)">Активация Windows</div>
<div class="t" style="left:-85.2px;top:11.6px;font-size:6.6px;color:rgba(255,255,255,0.35)">Чтобы активировать Windows, перейдите в раздел</div>
</div>
<!-- Avito watermark -->
<svg width="720" height="405" viewBox="0 0 720 405" style="left:0;top:0;opacity:0.64">
<circle cx="633.6" cy="373.6" r="6.1" fill="#fff"/>
<circle cx="623.6" cy="371.6" r="2.8" fill="#fff"/>
<circle cx="620.5" cy="385" r="6" fill="#fff"/>
<circle cx="635" cy="386.6" r="3.7" fill="#fff"/>
<text x="641.1" y="388.5" font-family="Liberation Sans" font-weight="700" font-size="29.6" fill="#fff" stroke="#fff" stroke-width="1.3" stroke-linejoin="round" textLength="64.6" lengthAdjust="spacingAndGlyphs">Avito</text>
</svg>

</div>
</body></html>
